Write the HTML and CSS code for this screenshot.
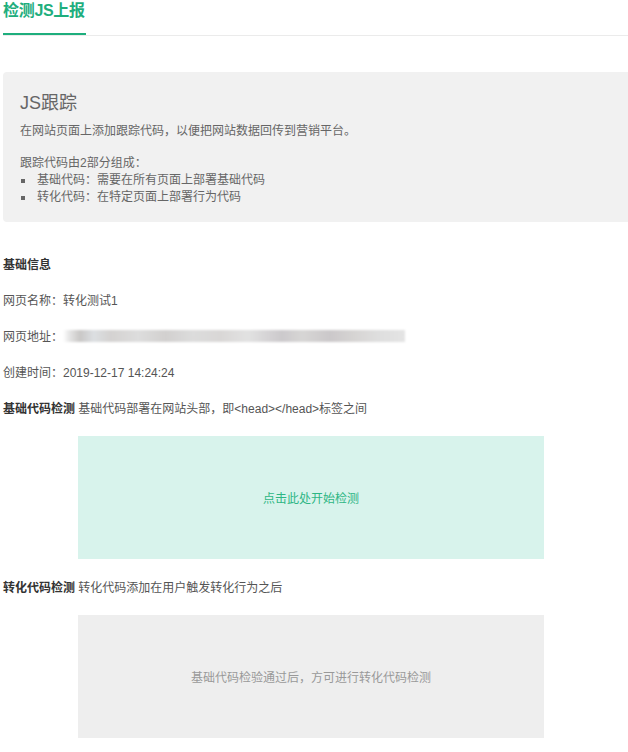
FILE: index.html
```html
<!DOCTYPE html>
<html lang="zh">
<head>
<meta charset="utf-8">
<title>检测JS上报</title>
<link rel="stylesheet" href="styles.css">
</head>
<body>
<div class="page">
  <div class="tabs">
    <div class="tab">检测JS上报</div>
  </div>

  <div class="panel">
    <h2 class="panel-title">JS跟踪</h2>
    <p class="panel-desc">在网站页面上添加跟踪代码，以便把网站数据回传到营销平台。</p>
    <p class="panel-sub">跟踪代码由2部分组成：</p>
    <ul class="panel-list">
      <li>基础代码：需要在所有页面上部署基础代码</li>
      <li>转化代码：在特定页面上部署行为代码</li>
    </ul>
  </div>

  <div class="info">
    <div class="section-title">基础信息</div>
    <div class="row">网页名称：转化测试1</div>
    <div class="row">网页地址：<span class="blurred"></span></div>
    <div class="row">创建时间：2019-12-17 14:24:24</div>
    <div class="row"><b>基础代码检测</b> 基础代码部署在网站头部，即&lt;head&gt;&lt;/head&gt;标签之间</div>
    <div class="check check-active">点击此处开始检测</div>
    <div class="row row-gap"><b>转化代码检测</b> 转化代码添加在用户触发转化行为之后</div>
    <div class="check check-disabled">基础代码检验通过后，方可进行转化代码检测</div>
  </div>
</div>
</body>
</html>
```
FILE: styles.css
```css
* { box-sizing: border-box; }
html, body { margin: 0; padding: 0; background: #fff; }
body {
  font-family: "Liberation Sans", Arial, "Noto Sans CJK SC", sans-serif;
  font-size: 12px;
  color: #555;
}
.page { padding-left: 3px; }

.tabs {
  border-bottom: 1px solid #ebebeb;
  display: flex;
}
.tab {
  font-size: 16px;
  font-weight: bold;
  line-height: 22px;
  color: #1eae7d;
  padding-bottom: 11px;
  border-bottom: 2px solid #1eae7d;
  width: 83px;
  white-space: nowrap;
  letter-spacing: -0.3px;
}

.panel {
  margin-top: 36px;
  background: #f1f1f1;
  border-radius: 4px 0 0 4px;
  padding: 19px 17px 16px;
  color: #666;
}
.panel-title {
  margin: 0;
  font-size: 18px;
  font-weight: normal;
  line-height: 24px;
  color: #666;
}
.panel-desc {
  margin: 8px 0 0;
  line-height: 17px;
}
.panel-sub {
  margin: 15px 0 0;
  line-height: 17px;
}
.panel-list {
  list-style: none;
  margin: 0;
  padding: 0;
}
.panel-list li {
  line-height: 17px;
  position: relative;
  padding-left: 17px;
}
.panel-list li::before {
  content: "";
  position: absolute;
  left: 1px;
  top: 7px;
  width: 4px;
  height: 4px;
  background: #666;
}

.info { padding-top: 35px; }
.section-title {
  font-weight: bold;
  color: #333;
  line-height: 17px;
}
.row {
  margin-top: 19px;
  line-height: 17px;
  color: #555;
}
.row b { color: #333; }
.row-gap { margin-top: 21px; }

.blurred {
  display: inline-block;
  vertical-align: middle;
  width: 342px;
  height: 12px;
  margin-top: -3px;
  background: linear-gradient(90deg,
    #fff 0, #e4e4e4 2%, #c9c7c6 5%, #dcdfe2 9%, #d4d2d1 14%, #ddd 22%,
    #d2d0cf 30%, #dcdcdc 38%, #d9d7d6 46%, #e2e2e2 54%, #ccc9cc 64%,
    #d7d6d5 70%, #cbc8ca 78%, #d6d4d3 85%, #dedede 92%, #e4e4e4 100%);
  filter: blur(1px);
}

.check {
  margin: 18px 0 0 75px;
  width: 466px;
  height: 123px;
  display: flex;
  align-items: center;
  justify-content: center;
}
.check-active {
  background: #d8f3ec;
  color: #2db684;
  cursor: pointer;
}
.check-disabled {
  background: #eeeeee;
  color: #999;
}
```
